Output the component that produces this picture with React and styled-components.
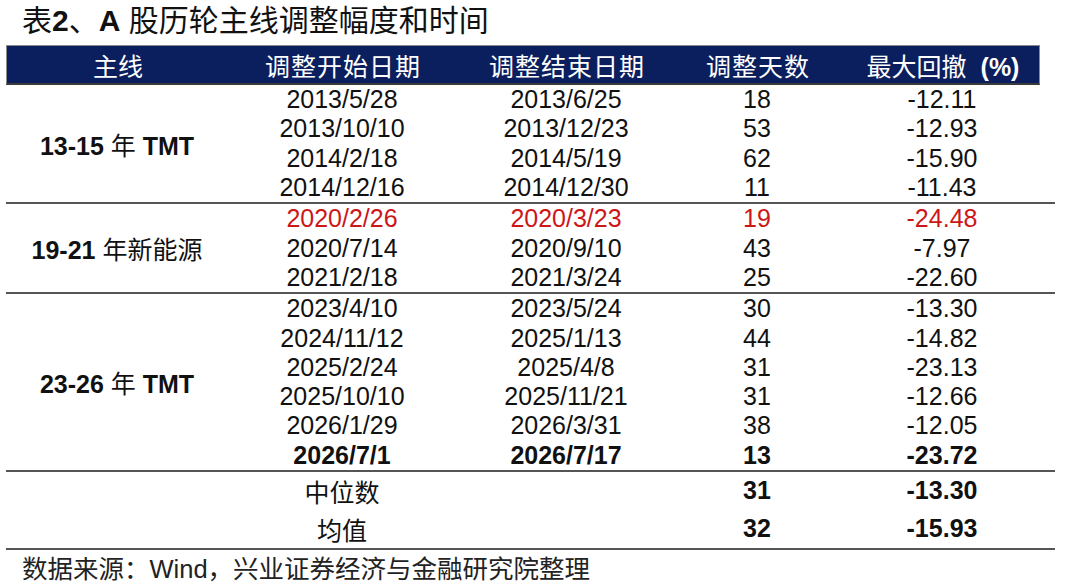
import React from 'react';
import styled, { createGlobalStyle } from 'styled-components';

const GlobalStyle = createGlobalStyle`
    body {
        margin: 0;
        background: #ffffff;
        font-family: "Liberation Sans", Arial, "Noto Sans CJK SC", sans-serif;
        color: #111111;
    }
`

const COLS = '222px 228px 220px 162px 208px';

const Page = styled.div`
    width: 1080px;
    height: 587px;
    padding: 0 25px 0 6px;
    box-sizing: border-box;
    overflow: hidden;
`
const Title = styled.h1`
    margin: 0 0 3px 16px;
    height: 42px;
    line-height: 42px;
    font-size: 30px;
    font-weight: normal;
    color: #111111;
`
const Strong = styled.b`
    font-weight: bold;
`
const Unit = styled.b`
    font-weight: bold;
    margin-left: 14px;
`
const Plain = styled.span`
    font-weight: normal;
`
const HeaderBar = styled.div`
    width: 1034px;
    height: 40px;
    box-sizing: border-box;
    display: grid;
    grid-template-columns: 222px 228px 220px 162px 1fr;
    align-items: center;
    background: #0b1f5e;
    border: 1px solid #8a8a8a;
    border-bottom: 2px solid #3a3a3a;
    color: #ffffff;
    font-size: 25px;
`
const HeadCell = styled.div`
    text-align: center;
    white-space: nowrap;
    letter-spacing: ${p => p.spaced ? '1px' : '0'};
    padding-left: ${p => p.shift || 0}px;
`
const Group = styled.div`
    display: grid;
    grid-template-columns: ${COLS};
    grid-auto-rows: ${p => p.rowHeight || 29.3}px;
    align-items: center;
    border-bottom: 2px solid #555555;
    font-size: 25px;
`
const Label = styled.div`
    grid-column: 1;
    grid-row: 1 / span ${p => p.span};
    text-align: center;
    font-weight: bold;
    white-space: nowrap;
`
const Cell = styled.div`
    grid-column: ${p => p.col};
    text-align: center;
    white-space: nowrap;
    color: ${p => p.red ? '#cc1719' : '#111111'};
    font-weight: ${p => p.bold ? 'bold' : 'normal'};
`
const Source = styled.div`
    height: 36px;
    line-height: 38px;
    padding-left: 16px;
    font-size: 25.5px;
    color: #222222;
`

const groups = [
    {
        label: <>13-15 <Plain>年</Plain> TMT</>,
        rows: [
            ['2013/5/28', '2013/6/25', '18', '-12.11'],
            ['2013/10/10', '2013/12/23', '53', '-12.93'],
            ['2014/2/18', '2014/5/19', '62', '-15.90'],
            ['2014/12/16', '2014/12/30', '11', '-11.43'],
        ],
    },
    {
        label: <>19-21 <Plain>年新能源</Plain></>,
        red: 0,
        rows: [
            ['2020/2/26', '2020/3/23', '19', '-24.48'],
            ['2020/7/14', '2020/9/10', '43', '-7.97'],
            ['2021/2/18', '2021/3/24', '25', '-22.60'],
        ],
    },
    {
        label: <>23-26 <Plain>年</Plain> TMT</>,
        bold: 5,
        rows: [
            ['2023/4/10', '2023/5/24', '30', '-13.30'],
            ['2024/11/12', '2025/1/13', '44', '-14.82'],
            ['2025/2/24', '2025/4/8', '31', '-23.13'],
            ['2025/10/10', '2025/11/21', '31', '-12.66'],
            ['2026/1/29', '2026/3/31', '38', '-12.05'],
            ['2026/7/1', '2026/7/17', '13', '-23.72'],
        ],
    },
]

export default function App() {
    return (
        <Page>
            <GlobalStyle />
            <Title>表<Strong>2</Strong>、<Strong>A</Strong> 股历轮主线调整幅度和时间</Title>
            <HeaderBar>
                <HeadCell>主线</HeadCell>
                <HeadCell spaced>调整开始日期</HeadCell>
                <HeadCell spaced>调整结束日期</HeadCell>
                <HeadCell spaced>调整天数</HeadCell>
                <HeadCell shift={8}>最大回撤<Unit>(%)</Unit></HeadCell>
            </HeaderBar>
            {groups.map((g, gi) => (
                <Group key={gi}>
                    <Label span={g.rows.length}>{g.label}</Label>
                    {g.rows.map((r, ri) => r.map((v, ci) => (
                        <Cell
                            key={ri + '-' + ci}
                            col={ci + 2}
                            style={{ gridRow: ri + 1 }}
                            red={g.red === ri}
                            bold={g.bold === ri}
                        >{v}</Cell>
                    )))}
                </Group>
            ))}
            <Group rowHeight={38}>
                <Cell col={2}>中位数</Cell>
                <Cell col={4} bold>31</Cell>
                <Cell col={5} bold>-13.30</Cell>
                <Cell col={2}>均值</Cell>
                <Cell col={4} bold>32</Cell>
                <Cell col={5} bold>-15.93</Cell>
            </Group>
            <Source>数据来源：Wind，兴业证券经济与金融研究院整理</Source>
        </Page>
    )
}
